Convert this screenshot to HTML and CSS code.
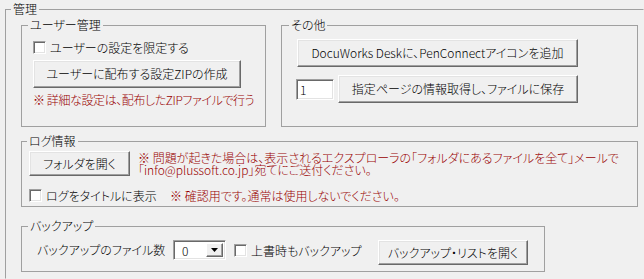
FILE: index.html
```html
<!DOCTYPE html>
<html lang="ja">
<head>
<meta charset="utf-8">
<link rel="stylesheet" href="styles.css">
</head>
<body>
<fieldset class="grp main">
  <legend class="lg lg-main">管理</legend>
  <div class="row1">
    <fieldset class="grp user">
      <legend class="lg">ユーザー管理</legend>
      <label class="chk chk-user"><span class="box"></span><span>ユーザーの設定を限定する</span></label>
      <button class="btn btn-zip">ユーザーに配布する設定ZIPの作成</button>
      <p class="note note-user">※ 詳細な設定は、配布したZIPファイルで行う</p>
    </fieldset>
    <fieldset class="grp other">
      <legend class="lg lg-other">その他</legend>
      <button class="btn btn-dw">DocuWorks Deskに、PenConnectアイコンを追加</button>
      <div class="page-row">
        <span class="field">1</span>
        <button class="btn btn-page">指定ページの情報取得し、ファイルに保存</button>
      </div>
    </fieldset>
  </div>
  <fieldset class="grp log">
    <legend class="lg lg-log">ログ情報</legend>
    <div class="log-row1">
      <button class="btn btn-folder">フォルダを開く</button>
      <div class="note-log">
        <p class="note note-line">※ 問題が起きた場合は、表示されるエクスプローラの「フォルダにあるファイルを全て」メールで</p>
        <p class="note note-line">「info@plussoft.co.jp」宛てにご送付ください。</p>
      </div>
    </div>
    <div class="log-row2">
      <label class="chk chk-log"><span class="box"></span><span>ログをタイトルに表示</span></label>
      <p class="note">※ 確認用です。通常は使用しないでください。</p>
    </div>
  </fieldset>
  <fieldset class="grp backup">
    <legend class="lg">バックアップ</legend>
    <div class="bk-row">
      <span class="bk-label">バックアップのファイル数</span>
      <span class="select"><span class="sel-val">0</span><span class="sel-btn"><svg width="7" height="4" viewBox="0 0 7 4"><path d="M0 0H7L3.5 4Z" fill="#000"/></svg></span></span>
      <label class="chk chk-bk"><span class="box"></span><span>上書時もバックアップ</span></label>
      <button class="btn btn-list">バックアップ・リストを開く</button>
    </div>
  </fieldset>
</fieldset>
</body>
</html>
```
FILE: styles.css
```css
html, body {
  margin: 0;
  padding: 0;
  background: #f0f0f0;
  overflow: hidden;
}
body {
  width: 644px;
  height: 279px;
  font-family: "Noto Sans CJK JP", "Noto Sans", sans-serif;
  font-size: 12px;
  font-weight: 300;
  line-height: 12px;
  color: #000;
  font-feature-settings: "palt";
}
.grp {
  box-sizing: border-box;
  margin: 0;
  padding: 0;
  min-width: 0;
  border: 1px solid #a0a0a0;
}
.lg {
  padding: 0 2px;
  margin-left: 6px;
  font-size: 12px;
  line-height: 12px;
}
.lg-main { margin-left: 5px; }
.lg-other { margin-left: 7px; }
.lg-log { margin-left: 5px; }
.main {
  margin: 3px 0 0 5px;
  width: 639px;
  height: 276px;
  border-right-color: transparent;
  border-bottom-color: transparent;
}
.row1 {
  display: flex;
  gap: 15px;
  margin: 4px 0 0 15px;
}
.user {
  width: 245px;
  padding-bottom: 20px;
}
.other {
  width: 357px;
}
.chk {
  display: flex;
  align-items: center;
  gap: 4px;
  height: 13px;
  white-space: nowrap;
}
.box {
  box-sizing: border-box;
  width: 13px;
  height: 13px;
  background: #fff;
  border: 1px solid;
  border-color: #a0a0a0 #fff #fff #a0a0a0;
  box-shadow: inset 1px 1px #696969, inset -1px -1px #e3e3e3;
  flex: none;
}
.chk-user { margin: 10px 0 0 11px; }
.btn {
  box-sizing: border-box;
  display: block;
  margin: 0;
  padding: 0;
  font: inherit;
  font-feature-settings: "palt";
  color: #000;
  background: #f0f0f0;
  border: 1px solid;
  border-color: #fff #696969 #696969 #fff;
  box-shadow: inset -1px -1px #a0a0a0, inset 1px 1px #e3e3e3;
  text-align: center;
  white-space: nowrap;
}
.btn-zip {
  margin: 6px 0 0 11px;
  width: 208px;
  height: 28px;
}
.note {
  margin: 0;
  color: #990000;
  line-height: 12px;
  white-space: nowrap;
}
.note-user {
  margin: 6px 0 0 11px;
  letter-spacing: -0.4px;
}
.btn-dw {
  margin: 8px 0 0 15px;
  width: 281px;
  height: 28px;
}
.page-row {
  display: flex;
  align-items: center;
  gap: 4px;
  margin: 8px 0 0 14px;
}
.field {
  box-sizing: border-box;
  width: 38px;
  height: 21px;
  background: #fff;
  border: 1px solid;
  border-color: #a0a0a0 #fff #fff #a0a0a0;
  box-shadow: inset 1px 1px #696969, inset -1px -1px #e3e3e3;
  padding: 4px 0 0 3px;
}
.btn-page {
  width: 240px;
  height: 28px;
}
.log {
  width: 617px;
  margin: 8px 0 0 15px;
  padding-bottom: 4px;
}
.log-row1 {
  display: flex;
  align-items: flex-start;
  gap: 8px;
  margin: 4px 0 0 7px;
}
.btn-folder {
  width: 101px;
  height: 25px;
}
.note-log {
  display: flex;
  flex-direction: column;
  margin-top: 1px;
}
.note-line { height: 12px; }
.log-row2 {
  display: flex;
  align-items: center;
  margin: 13px 0 0 7px;
}
.chk-log { width: 141px; }
.backup {
  width: 524px;
  margin: 13px 0 0 15px;
  padding-bottom: 6px;
}
.bk-row {
  display: flex;
  align-items: flex-start;
  margin: 8px 0 0 15px;
}
.bk-label {
  width: 136px;
  margin-top: 4px;
  white-space: nowrap;
}
.select {
  box-sizing: border-box;
  display: flex;
  align-items: stretch;
  justify-content: space-between;
  width: 53px;
  height: 20px;
  background: #fff;
  border: 1px solid;
  border-color: #a0a0a0 #fff #fff #a0a0a0;
  box-shadow: inset 1px 1px #696969, inset -1px -1px #e3e3e3;
  padding: 2px;
}
.sel-val {
  padding: 2px 0 0 6px;
}
.sel-btn {
  box-sizing: border-box;
  width: 17px;
  display: flex;
  align-items: center;
  justify-content: center;
  background: #f0f0f0;
  border: 1px solid;
  border-color: #fff #696969 #696969 #fff;
  box-shadow: inset -1px -1px #a0a0a0;
}
.chk-bk {
  width: 144px;
  margin: 4px 0 0 8px;
}
.btn-list {
  width: 150px;
  height: 25px;
}
```
